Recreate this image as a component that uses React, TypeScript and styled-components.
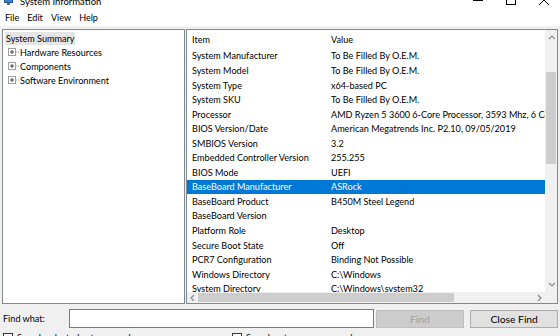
import styled, { createGlobalStyle } from "styled-components";

const rows: [string, string][] = [
  ["System Manufacturer", "To Be Filled By O.E.M."],
  ["System Model", "To Be Filled By O.E.M."],
  ["System Type", "x64-based PC"],
  ["System SKU", "To Be Filled By O.E.M."],
  ["Processor", "AMD Ryzen 5 3600 6-Core Processor, 3593 Mhz, 6 Core(s), 12 Logical Processor(s)"],
  ["BIOS Version/Date", "American Megatrends Inc. P2.10, 09/05/2019"],
  ["SMBIOS Version", "3.2"],
  ["Embedded Controller Version", "255.255"],
  ["BIOS Mode", "UEFI"],
  ["BaseBoard Manufacturer", "ASRock"],
  ["BaseBoard Product", "B450M Steel Legend"],
  ["BaseBoard Version", ""],
  ["Platform Role", "Desktop"],
  ["Secure Boot State", "Off"],
  ["PCR7 Configuration", "Binding Not Possible"],
  ["Windows Directory", "C:\\Windows"],
  ["System Directory", "C:\\Windows\\system32"],
  ["Boot Device", "\\Device\\HarddiskVolume1"],
];

const SELECTED = 9;

const treeChildren = ["Hardware Resources", "Components", "Software Environment"];

function PlusBox() {
  return (
    <svg width="11" height="9" viewBox="0 0 11 9">
      <rect x="0.5" y="0.5" width="7" height="7" fill="#fff" stroke="#a0a0a0" />
      <path d="M2 4h4M4 2v4" stroke="#404040" strokeWidth="1" />
      <path d="M8 4h1M10 4h1" stroke="#a0a0a0" strokeWidth="1" />
    </svg>
  );
}

function Chevron({ dir }: { dir: "up" | "down" | "left" | "right" }) {
  const d = {
    up: "M1 5l3-3 3 3",
    down: "M1 2l3 3 3-3",
    left: "M5 1l-3 3 3 3",
    right: "M2 1l3 3-3 3",
  }[dir];
  return (
    <svg width="7" height="7" viewBox="0 0 7 7">
      <path d={d} fill="none" stroke="#8a8a8a" strokeWidth="1.2" />
    </svg>
  );
}

function App() {
  return (
    <>
      <GlobalStyle />
      <Window>
        <TitleBar>
          <AppIcon>
            <svg width="9" height="9" viewBox="0 0 9 9">
              <rect x="0.5" y="0.5" width="8" height="6" fill="#3b7fd0" stroke="#2a5a9a" />
              <rect x="3" y="7" width="3" height="2" fill="#6a6a6a" />
            </svg>
          </AppIcon>
          <TitleText>System Information</TitleText>
          <Controls>
            <ControlButton>
              <svg width="10" height="10" viewBox="0 0 10 10">
                <path d="M0 5.5h10" stroke="#000" strokeWidth="1" />
              </svg>
            </ControlButton>
            <ControlButton>
              <svg width="10" height="10" viewBox="0 0 10 10">
                <rect x="0.5" y="0.5" width="9" height="9" fill="none" stroke="#000" />
              </svg>
            </ControlButton>
            <ControlButton>
              <svg width="10" height="10" viewBox="0 0 10 10">
                <path d="M0 0l10 10M10 0L0 10" stroke="#000" strokeWidth="1" />
              </svg>
            </ControlButton>
          </Controls>
        </TitleBar>

        <MenuBar>
          <MenuItem>File</MenuItem>
          <MenuItem>Edit</MenuItem>
          <MenuItem>View</MenuItem>
          <MenuItem>Help</MenuItem>
        </MenuBar>

        <Main>
          <TreePane>
            <TreeRow>
              <TreeLabel $selected>System Summary</TreeLabel>
            </TreeRow>
            {treeChildren.map((name) => (
              <TreeRow key={name} $child>
                <PlusBox />
                <TreeLabel>{name}</TreeLabel>
              </TreeRow>
            ))}
          </TreePane>

          <ListPane>
            <ListView>
              <Header>
                <Cell>Item</Cell>
                <Cell>Value</Cell>
              </Header>
              {rows.map(([item, value], i) => (
                <Row key={item} $selected={i === SELECTED}>
                  <Cell>{item}</Cell>
                  <Cell>{value}</Cell>
                </Row>
              ))}
            </ListView>
            <VScroll>
              <ArrowBox $v>
                <Chevron dir="up" />
              </ArrowBox>
              <TrackGap />
              <VThumb />
              <TrackFill />
              <ArrowBox $v>
                <Chevron dir="down" />
              </ArrowBox>
            </VScroll>
            <HScroll>
              <ArrowBox>
                <Chevron dir="left" />
              </ArrowBox>
              <HThumb />
              <TrackFill />
              <ArrowBox>
                <Chevron dir="right" />
              </ArrowBox>
            </HScroll>
            <Corner />
          </ListPane>
        </Main>

        <FindBar>
          <FindLabel>Find what:</FindLabel>
          <FindInput />
          <Button disabled>Find</Button>
          <Button $wide>Close Find</Button>
        </FindBar>

        <Options>
          <Option>
            <Check />
            Search selected category only
          </Option>
          <Option>
            <Check />
            Search category names only
          </Option>
        </Options>
      </Window>
    </>
  );
}

const GlobalStyle = createGlobalStyle`
  html, body {
    margin: 0;
    padding: 0;
  }
  body {
    width: 560px;
    height: 336px;
    overflow: hidden;
    background: #f0f0f0;
    font-family: Lato, "Liberation Sans", sans-serif;
    font-size: 9.1px;
    color: #000;
  }
  * {
    box-sizing: border-box;
  }
`;

const Window = styled.div`
  display: flex;
  flex-direction: column;
  height: 336px;
  overflow: hidden;
  & > * {
    flex: none;
  }
`;

const TitleBar = styled.div`
  height: 10px;
  background: #fff;
  display: flex;
  align-items: flex-start;
  overflow: hidden;
  padding-left: 4px;
`;

const AppIcon = styled.div`
  margin-top: -4px;
  width: 16px;
`;

const TitleText = styled.div`
  margin-top: -4px;
  line-height: 12px;
  font-size: 9.5px;
`;

const Controls = styled.div`
  margin-left: auto;
  display: flex;
`;

const ControlButton = styled.div`
  width: 33px;
  height: 10px;
  display: flex;
  justify-content: center;
  svg {
    margin-top: -5px;
  }
`;

const MenuBar = styled.div`
  height: 16px;
  background: #fff;
  display: flex;
  align-items: center;
  padding-left: 1px;
`;

const MenuItem = styled.div`
  padding: 0 4px;
  line-height: 16px;
`;

const Main = styled.div`
  display: flex;
  gap: 1px;
  padding: 3px 2px 0 2px;
  height: 278px;
`;

const TreePane = styled.div`
  width: 183px;
  background: #fff;
  border: 1px solid #828790;
  padding: 1px 2px;
`;

const TreeRow = styled.div<{ $child?: boolean }>`
  height: 14px;
  display: flex;
  align-items: center;
  padding-left: ${(p) => (p.$child ? "3px" : "0")};
  white-space: nowrap;
`;

const TreeLabel = styled.span<{ $selected?: boolean }>`
  padding: 0 1px;
  line-height: 13px;
  background: ${(p) => (p.$selected ? "#e5e5e5" : "transparent")};
`;

const ListPane = styled.div`
  flex: 1;
  background: #fff;
  border: 1px solid #828790;
  display: grid;
  grid-template-columns: 1fr 12px;
  grid-template-rows: 1fr 11px;
  overflow: hidden;
`;

const ListView = styled.div`
  overflow: hidden;
`;

const Header = styled.div`
  display: grid;
  grid-template-columns: 139px 1fr;
  height: 18.7px;
  align-items: center;
`;

const Row = styled.div<{ $selected?: boolean }>`
  display: grid;
  grid-template-columns: 139px 1fr;
  height: 14.56px;
  align-items: center;
  background: ${(p) => (p.$selected ? "#0078d7" : "transparent")};
  color: ${(p) => (p.$selected ? "#fff" : "#000")};
`;

const Cell = styled.div`
  padding-left: 5px;
  white-space: nowrap;
  overflow: hidden;
`;

const VScroll = styled.div`
  background: #f0f0f0;
  display: flex;
  flex-direction: column;
`;

const HScroll = styled.div`
  background: #f0f0f0;
  display: flex;
`;

const Corner = styled.div`
  background: #f0f0f0;
`;

const ArrowBox = styled.div<{ $v?: boolean }>`
  flex: none;
  width: ${(p) => (p.$v ? "12px" : "11px")};
  height: ${(p) => (p.$v ? "15px" : "11px")};
  display: flex;
  align-items: center;
  justify-content: center;
`;

const TrackGap = styled.div`
  height: 27px;
  flex: none;
`;

const TrackFill = styled.div`
  flex: 1;
`;

const VThumb = styled.div`
  flex: none;
  height: 92px;
  margin: 0 1px;
  background: #cdcdcd;
`;

const HThumb = styled.div`
  flex: none;
  width: 256px;
  margin: 1px 0;
  background: #cdcdcd;
`;

const FindBar = styled.div`
  display: flex;
  align-items: center;
  padding: 5px 2px 0 3px;
  height: 24px;
`;

const FindLabel = styled.div`
  width: 66px;
`;

const FindInput = styled.div`
  width: 306px;
  height: 19px;
  background: #fff;
  border: 1px solid #7a7a7a;
`;

const Button = styled.button<{ $wide?: boolean }>`
  margin-left: ${(p) => (p.$wide ? "6px" : "2px")};
  width: ${(p) => (p.$wide ? "88px" : "89px")};
  height: 18px;
  font: inherit;
  font-size: 10.3px;
  padding: 0;
  background: #e1e1e1;
  border: 1px solid #adadad;
  color: #000;
  &:disabled {
    background: #cccccc;
    border-color: #bfbfbf;
    color: #a0a0a0;
  }
`;

const Options = styled.div`
  display: flex;
  padding: 5px 0 0 3px;
`;

const Option = styled.div`
  display: flex;
  align-items: flex-start;
  gap: 4px;
  width: 229px;
  line-height: 10px;
`;

const Check = styled.span`
  width: 10px;
  height: 10px;
  border: 1px solid #333;
  background: #fff;
`;

export default App;
